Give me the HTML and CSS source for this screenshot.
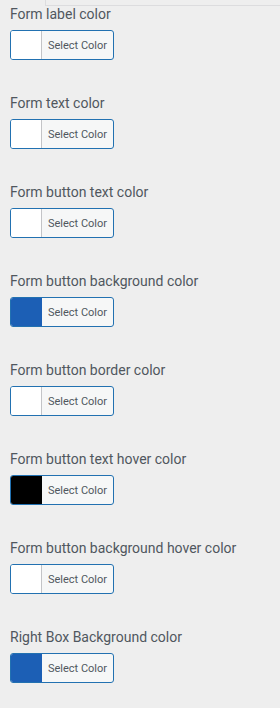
FILE: index.html
```html
<!DOCTYPE html>
<html lang="en">
<head>
    <meta charset="UTF-8">
    <meta name="viewport" content="width=device-width, initial-scale=1.0">
    <title>Colors</title>
    <link rel="stylesheet" href="styles.css">
</head>
<body>
    <div class="edge"></div>

    <div class="settings">
        <div class="field">
            <label>Form label color</label>
            <button class="picker"><span class="swatch"></span><span class="picker-text">Select Color</span></button>
        </div>
        <div class="field">
            <label>Form text color</label>
            <button class="picker"><span class="swatch"></span><span class="picker-text">Select Color</span></button>
        </div>
        <div class="field">
            <label>Form button text color</label>
            <button class="picker"><span class="swatch"></span><span class="picker-text">Select Color</span></button>
        </div>
        <div class="field">
            <label>Form button background color</label>
            <button class="picker"><span class="swatch blue"></span><span class="picker-text">Select Color</span></button>
        </div>
        <div class="field">
            <label>Form button border color</label>
            <button class="picker"><span class="swatch"></span><span class="picker-text">Select Color</span></button>
        </div>
        <div class="field">
            <label>Form button text hover color</label>
            <button class="picker"><span class="swatch black"></span><span class="picker-text">Select Color</span></button>
        </div>
        <div class="field">
            <label>Form button background hover color</label>
            <button class="picker"><span class="swatch"></span><span class="picker-text">Select Color</span></button>
        </div>
        <div class="field">
            <label>Right Box Background color</label>
            <button class="picker"><span class="swatch blue"></span><span class="picker-text">Select Color</span></button>
        </div>
    </div>
</body>
</html>
```

FILE: styles.css
```css
body {
    margin: 0;
    font-family: Roboto, "Liberation Sans", sans-serif;
    background-color: #eeeeee;
    color: #50575e;
}

.edge {
    position: absolute;
    top: 0;
    left: 45px;
    right: 0;
    height: 5px;
    border-left: 1px solid #dcdcde;
    border-bottom: 1px solid #dcdcde;
}

.settings {
    padding: 4px 10px 0;
}

.field {
    margin-bottom: 33px;
}

.field label {
    display: block;
    font-size: 14px;
    line-height: 20px;
    margin-bottom: 6px;
}

.picker {
    display: flex;
    width: 104px;
    height: 30px;
    padding: 0;
    border: 1px solid #2271b1;
    border-radius: 3px;
    background-color: #f6f7f7;
    overflow: hidden;
    font-family: inherit;
    cursor: pointer;
}

.swatch {
    width: 30px;
    height: 100%;
    background-color: #ffffff;
    border-right: 1px solid #c3c4c7;
}

.swatch.blue {
    background-color: #1c5fb5;
    border-right-color: #1c5fb5;
}

.swatch.black {
    background-color: #000000;
    border-right-color: #000000;
}

.picker-text {
    flex: 1;
    align-self: center;
    font-size: 11px;
    color: #50575e;
    text-align: center;
}
```
